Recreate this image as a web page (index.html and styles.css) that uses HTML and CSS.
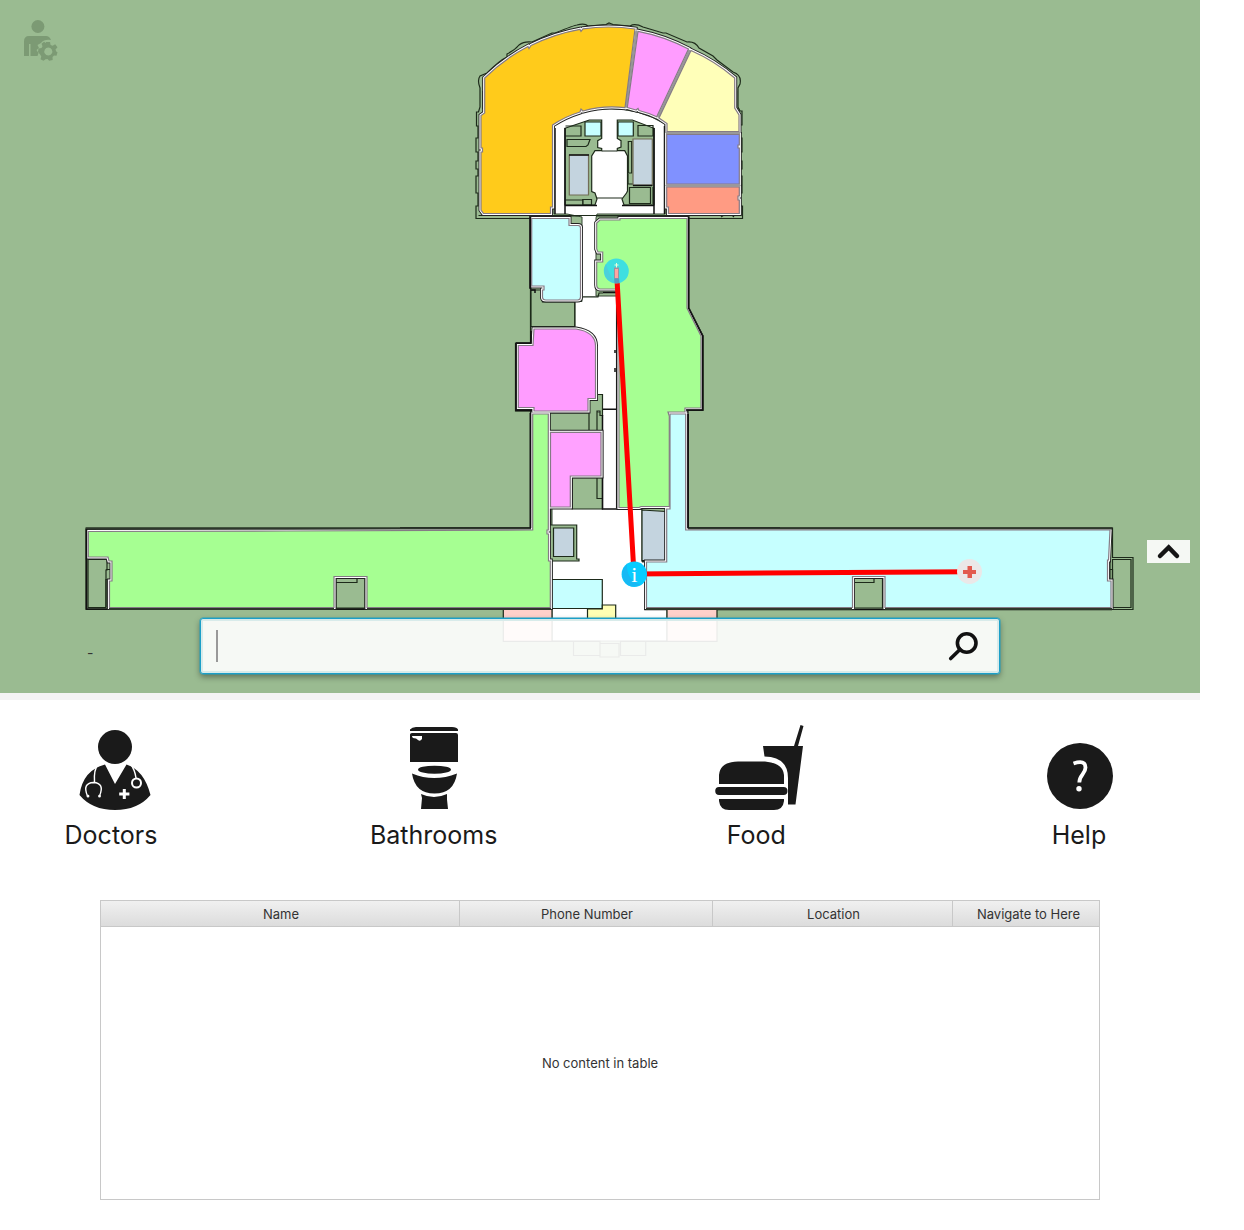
FILE: index.html
```html
<!DOCTYPE html>
<html lang="en">
<head>
<meta charset="utf-8">
<title>Hospital Map</title>
<link rel="stylesheet" href="styles.css">
</head>
<body>
<main class="app">
<section class="map">
<svg class="plan" viewBox="0 0 1200 693" width="1200" height="693">
  <defs>
    <path id="orange" d="M484.7 78A178.7 178.7 0 0 1 528 46.5l1 2 2-3A178.7 178.7 0 0 1 580 29.3l1 2 2-2.5A178.7 178.7 0 0 1 635 29L625 107.700A105 105 0 0 0 583 111l-2-2-1 3A105 105 0 0 0 552.500 125V207H550.500V213.500H483.500L481 210V152H482.500V148H481V115.500L484.700 113Z"/>
    <path id="pinkTop" d="M638 31.300A178.700 178.700 0 0 1 688.500 49L656.700 116.700A105 105 0 0 0 639 110.500l-1-2-2 1.500A105 105 0 0 0 627.300 107.500Z"/>
    <path id="yellow" d="M691 50.500A178.700 178.700 0 0 1 734.700 78V108L739 115V131.500H667V123.500L659 118Z"/>
    <path id="blue" d="M666.700 134.500H739.300V145H738V148H739.300V184H666.700Z"/>
    <path id="salmon" d="M666.700 187H739.300V196H738V200H739.300V213.500H668.500V207H666.700Z"/>
    <path id="cyanTop" d="M531.700 218.500H569V225.500H578Q580.500 225.500 580.500 228V297Q580.500 300 577.500 300H546Q542.500 300 542.500 297V290H544V286H531.700Z"/>
    <path id="greenMain" d="M600 220H620V218.500H687V308L701 336V408H685V412H668L669.300 416V506.500H641L639 507.500H619V291L616 289H600Q596.700 288.500 596.700 285V262H602.700V252H598L596.700 249V223Z"/>
    <path id="pinkMid" d="M534 329H576Q595.500 332 595.500 346V398.500H588V411H534V407.500H518.300V345.500H533Z"/>
    <path id="greenWing" d="M532.700 414H548.300V530H547V534H548.500V561H550.300V607.500H367V576.500H334V607.500H109.500V581H112V561H109L108 557H88.300V531.500L287 531L532.700 530Z"/>
    <path id="pinkLow" d="M550.500 432.300H601V476H570.300V507H550.500Z"/>
    <path id="cyanWing" d="M670 414H685.700V530H1110L1108.500 560H1107.500V581H1111V607.500H885V576.500H852.500V607.500H646.500V562H666.700V509H670Z"/>
  </defs>
  <g class="detail">
    <path class="ground" d="M476 218.500V206h2v-13h-2v-17h2v-7h-2v-8h2v-9h-2v-14h2v-12h-1.500v-14h2L480 107V88Q477 80 480 76L487 73Q500 60 507 57V54Q515 50 519 45Q524 41 532 42L552 33L555 33Q575 25 577 25Q585 23 588 26L606 24.500L609 23L613 24.500L630 26Q635 23 643 27L663 33L666 33L687 42Q695 41 699 48L713 56L717 60L733 72Q742 75 740 84L738 88V107L740 111h2v14h-2v13h2v14h-2v9h2v8h-2v7h2v17h-2v13h2.500v12.500Z"/>
    <path class="ground" d="M530.500 216H688.500V308L703 336V410.500H688V528H1112.500V557.500H1133V609.500H86V528H530.500V411H515.500V343H530.500Z"/>
    <path d="M478.500 215.500H741M483 91V109M736.500 91V109M721 217l3-2h8l2 2"/>
  </g>
  <path class="hall" d="M554 125A105 105 0 0 1 665 124V214H597L596 218V296H616.700V508H642V562H645V609H667V641H552V480H602.500V412H597V345Q591 331 575 327.500V301.500H582V217L567 214H554Z"/>
  <g class="detail">
    <path class="ground" d="M565 128.300 589.300 120H601.700V138.500L597.700 140.700V147.500L601.700 148.500V150.700H595L591.700 156V191.500L595 193L597 199L595 205H565ZM617.300 120H632.300L654 128.300V205H624L622 199L626.500 193L627.500 191V156L624.700 150.700H617.300V148.500L621 147V140.700L617.300 138.500Z"/>
    <path d="M601.700 151H617.300M596.500 198H622.500"/>
    <path d="M565.500 126H581V136H565.500M567 139.500H590L588 145L586 146.500H567ZM565.500 200H583V205H591.500V199.500H582.700V205M628.300 141.500H631.700V173H628.300ZM638 125.500H653V136H638ZM628 174V184H633M629.500 187.500H650.500V203.500H629.500ZM653 187V204"/>
    <path class="line" d="M565 128V214M654 128V214M565 205.500H597M622 205.500H654M555 128V214M664.500 126V214"/>
    <path d="M552 215.500H668"/>
    <path class="aqua" d="M585 122H601V136H585ZM618 122H633.300V136H618Z"/>
    <path class="steel tan" d="M569.300 155H588.500V195H569.300ZM633 139H652.300V185H633Z"/>
    <path class="line" d="M569 155H589M633 185.500H652.500"/>
    <path class="ground" d="M531 290H542.500V301.800H574.700V326.500H531ZM549 413H589V431H549ZM589 399H597V394.500H602.500V415.500H600V411H597V431H589ZM572.300 477.700H602.500V509H572.300ZM549.300 525H576.700V559H579V561H549.300ZM336 578H365V608H336ZM854 578H882.500V608H854ZM88 559.500H107V570H106V607.500H88ZM1112.500 559.500H1131V607.500H1112.500Z"/>
    <path d="M582 296.800H598L599 293H603M336 582.500H357V578M854 582.500H874V578M106 569.500H111V579.500H106V607M597 477.700V498.500H602M1108 569.500H1112.500V580H1108.500M1110 557.500V609.500"/>
    <path class="line" d="M603 292.500H616.700V508M603 409.200H616.700M602.500 415V509H642M550.500 509V525M531 290H535V293M530.500 216V289M530.500 413V528H400M688 414V528H780M645 561V609.500H667M86 609H551M645 609.500H1112"/>
    <path class="steel" d="M553.500 528H573.700V556.500H553.500ZM642 510 665.500 511.500V560.500H642Z"/>
    <path class="line" d="M642 561H667M615 350v3M615 368v4"/>
    <path class="aqua" d="M551.700 579.500H602.300V608.500H551.700Z"/>
    <path class="rose" d="M503.300 609.500H552V641.300H503.300ZM667 609.500H717V641.300H667Z"/>
    <path class="cream" d="M587.500 609H602.300V605H615.700V618.500H587.500Z"/>
    <path d="M552 641.300H600V655.500H573.500V641.300M600 643.500H619V657H600ZM620.500 641.300H645.700V655.500H620.500ZM645 641.300H667"/>
  </g>
  <g class="edge"><use href="#orange"/><use href="#pinkTop"/><use href="#yellow"/><use href="#cyanTop"/><use href="#greenMain"/><use href="#pinkMid"/><use href="#greenWing"/><use href="#pinkLow"/><use href="#cyanWing"/><use href="#blue"/><use href="#salmon"/></g>
  <g class="wall"><use href="#orange"/><use href="#pinkTop"/><use href="#yellow"/><use href="#cyanTop"/><use href="#greenMain"/><use href="#pinkMid"/><use href="#greenWing"/><use href="#pinkLow"/><use href="#cyanWing"/><use href="#blue"/><use href="#salmon"/></g>
  <path class="divider" d="M636.500 31 626 107.500M689.700 50 658 117.500M666 133H740M666 185.500H740"/>
  <path class="beam" d="M86 528.500H531M688 528.500H1112M109 609H334M367 609H551M646 609H852M885 609H1112"/>
  <path class="outline" d="M530.500 217V289M688.500 217V308L702.500 336V410H686M516 343V410.500H532M516 343H531V331M530.500 413V528M688 414V528M86.500 529V609"/>
  <g class="room">
    <use href="#orange" fill="#ffcb1b"/><use href="#pinkTop" fill="#ff9cff"/><use href="#yellow" fill="#ffffb9"/>
    <use href="#blue" fill="#8091ff"/><use href="#salmon" fill="#ff9b83"/><use href="#cyanTop" fill="#c6ffff"/>
    <use href="#greenMain" fill="#a6ff92"/><use href="#pinkMid" fill="#ff9cff"/><use href="#greenWing" fill="#a6ff92"/>
    <use href="#pinkLow" fill="#ffa1ff"/><use href="#cyanWing" fill="#c6ffff"/>
  </g>
  <path class="route" d="M616.500 271 634 574 969 571.700"/>
  <g class="markers">
    <circle cx="616.300" cy="271" r="12.500" fill="#3fdfe0"/>
    <path d="M606 264Q610 277 616 283.300Q605 282 604 271Q604 267 606 264Z" fill="#4cd0da"/>
    <path d="M614 278h5l.5 5h-5z" fill="#579abd"/>
    <path d="M616.500 263v5M614.500 265h4" stroke="#e9ffdc"/>
    <path d="M614 267.500h5v11h-5z" fill="#9a92a0"/><path d="M615 269h3v9h-3z" fill="#ffa5a1"/>
    <circle cx="634.300" cy="574.300" r="12.700" fill="#08ccff"/>
    <path d="M627 564Q626 580 641 584.500Q630 590 624 581Q619 571 627 564Z" fill="#17b9f4"/>
    <text class="info" x="634.300" y="581.500" text-anchor="middle">i</text>
    <circle cx="969.500" cy="571.500" r="12.500" fill="#ebe8e8"/>
    <path d="M967.500 566h4.500v4h4v4h-4v4h-4.500v-4h-4.500v-4h4.500z" fill="#e25a4e"/>
  </g>
</svg>
<svg class="admin" viewBox="0 0 36 42" width="36" height="42">
  <circle cx="13.900" cy="6.500" r="6.500"/>
  <path d="M0 21.500Q0 16 5 16H22Q25.500 16 27 20Q20 19 17 23L13.500 25L15 28L12.500 30L14.500 33L13.500 36H6.500V24H5V36H0Z"/>
  <path fill-rule="evenodd" d="M22 22h4l.6 3 2 .8 2.600-1.500 2.300 3-2 2.200.7 2 1.300.7-1 3.600-2.500-.3-1.500 1.500.2 3-3.500.7-1.700-1.700-2 .2-2 1.500-3-1.500.8-2.800-1.200-2L14 32l.5-3.500 3-.6 1-1.700-1-2.400 2.500-2 2 1.200zM24.300 27.500a4 4 0 1 0 .01 0z"/>
</svg>
<span class="floor">-</span>
<button class="expand" aria-label="Expand"><svg viewBox="0 0 43 23" width="43" height="23"><path d="M13 16 21.700 7.500 30 16"/></svg></button>
<div class="search">
  <span class="caret"></span>
  <svg class="lens" viewBox="0 0 32 32" width="32" height="32"><circle cx="18.700" cy="13" r="9.300"/><path d="M12 19.500 2.700 28.500"/></svg>
</div>
</section>
<nav class="categories">
  <a class="category"><svg viewBox="46 720 130 95" width="130" height="95">
    <circle cx="115" cy="747" r="17"/><path d="M105 764.500 115 784 126.500 764.500Q144 770 150.500 795Q138 810 115 810Q92 810 79.500 795Q83 770 105 764.500Z"/>
    <g class="cut"><path d="M98.500 763Q93.500 770 94.500 782M87.500 796Q82 783 93.500 782.500Q105 783 99.500 796"/><circle cx="88" cy="796.200" r=".7"/><circle cx="99.500" cy="796.200" r=".7"/><path d="M130 763Q135 770 136 778"/><circle cx="136.500" cy="783" r="4.500" stroke-width="2"/><path class="cross" d="M124.300 789v10M119.200 794h10.200"/></g>
  </svg><span>Doctors</span></a>
  <a class="category"><svg viewBox="369 720 130 95" width="130" height="95">
    <path d="M410 731v-1.500Q412 727 416 727H452Q457 727 458 729.500V731ZM410 734.500Q410 733 412 733H456Q458 733 458 735V762H410ZM421 794Q434 800 447 794V799.500L448 809H421L422 798Z"/>
    <path d="M412 773.500Q434 782.500 457 773.500Q454 793.500 434.500 793.500Q415 793.500 412 773.500Z"/><ellipse cx="434.500" cy="769.700" rx="16.500" ry="4"/><path class="paper" d="M412 736h10v3q-2 3-4 1l-2-1.500q-4 0-4-2.500z"/>
  </svg><span>Bathrooms</span></a>
  <a class="category"><svg viewBox="691 720 130 95" width="130" height="95">
    <path d="M800.500 725 803.500 726 798 746H803L795.500 804.500H788V778Q788 757 764.500 756.500L763 746H794ZM719 784V775Q720 762 738 761.500H765Q783 763 784 775V784ZM719 787H783.500A3.900 3.900 0 0 1 783.500 795H719.500A3.900 3.900 0 0 1 719 787ZM719 799H784V801Q783 810 774 810H729Q720 810 719 801Z"/>
  </svg><span>Food</span></a>
  <a class="category"><svg viewBox="1014 720 130 95" width="130" height="95">
    <circle cx="1080" cy="776" r="33"/><path class="mark" d="M1073.500 763.500Q1085.500 759.500 1085.500 767.500C1085.500 774 1079.300 775 1079.300 782.500"/><circle class="paper" cx="1079" cy="788.800" r="2.700"/>
  </svg><span>Help</span></a>
</nav>
<section class="table">
  <div class="head"><span>Name</span><span>Phone Number</span><span>Location</span><span>Navigate to Here</span></div>
  <div class="empty">No content in table</div>
</section>
</main>
</body>
</html>
```
FILE: styles.css
```css
body { margin: 0; background: #fff; font-family: Inter, "Liberation Sans", sans-serif; }
.app { width: 1200px; height: 1230px; }
.map { position: relative; height: 693px; background: #9abb91; border-bottom: 7px solid #f4f4f4; }
.plan { display: block; }
.detail path { fill: none; stroke: #1d2a1a; stroke-width: 1.2; }
.detail .ground { fill: #9abb91; }
.detail .line { stroke: #111; stroke-width: 1.5; }
.detail .aqua { fill: #c6ffff; }
.detail .steel { fill: #c4d4df; }
.detail .tan { stroke: #716d57; }
.detail .rose { fill: #ffd0ca; }
.detail .cream { fill: #ffffb3; }
.hall { fill: #fff; stroke: #344532; stroke-width: 1; }
.edge { fill: none; stroke: #222; stroke-width: 5; }
.wall { fill: none; stroke: #fff; stroke-width: 3.2; }
.divider { fill: none; stroke: #999; stroke-width: 2.4; }
.beam { fill: none; stroke: #2d382b; stroke-width: 2; }
.outline { fill: none; stroke: #111; stroke-width: 1.5; }
.room { stroke: #857b85; stroke-width: 1.2; }
.route { fill: none; stroke: #f00; stroke-width: 5; }
.info { font: 22px "Liberation Serif", serif; fill: #fff; }
.admin { position: absolute; left: 24px; top: 20px; fill: #7c9a74; }
.floor { position: absolute; left: 87px; top: 644px; font-size: 14px; line-height: 18px; color: #333; }
.expand { position: absolute; left: 1147px; top: 540px; width: 43px; height: 23px; padding: 0; border: 0; background: #f5f8f4; }
.expand svg { display: block; fill: none; stroke: #151515; stroke-width: 4.5; stroke-linecap: round; }
.search { position: absolute; left: 200px; top: 618px; width: 800px; height: 56px; box-sizing: border-box; display: flex; align-items: center; justify-content: space-between; padding: 0 19px 0 15px; border: 1px solid #1b9fc8; border-radius: 3px; background: rgba(255,255,255,.91); box-shadow: 0 0 0 .5px #249fc0, inset 0 0 0 2px #d8ebea, 0 3px 6px rgba(0,0,0,.4); }
.caret { width: 2px; height: 32px; background: #999; }
.lens { fill: none; stroke: #111; stroke-width: 3.6; stroke-linecap: round; }
.categories { display: flex; justify-content: space-between; height: 180px; padding: 20px 56px 0 46px; box-sizing: border-box; }
.category { display: flex; flex-direction: column; align-items: center; width: 130px; color: #1a1a1a; font-size: 25px; line-height: 40px; }
.category svg { display: block; fill: #1a1a1a; }
.category .cut { fill: none; stroke: #fff; stroke-width: 1.4; }
.category .cross { stroke-width: 3; }
.category .paper { fill: #fff; }
.category .mark { fill: none; stroke: #fff; stroke-width: 3.8; }
.table { display: flex; flex-direction: column; height: 300px; margin: 20px 100px 0; box-sizing: border-box; border: 1px solid #c8c8c8; font-size: 13px; color: #333; }
.head { display: grid; grid-template-columns: 359px 253px 240px 146px; height: 26px; box-sizing: border-box; border-bottom: 1px solid #c8c8c8; background: linear-gradient(#f0f0f0, #dcdcdc); line-height: 25px; text-align: center; }
.head span { height: 25px; box-sizing: border-box; padding: 1px 0 0 2px; border-right: 1px solid #c8c8c8; }
.head span:last-child { border-right: 0; padding-left: 5px; }
.empty { flex: 1; display: flex; align-items: center; justify-content: center; }
```
